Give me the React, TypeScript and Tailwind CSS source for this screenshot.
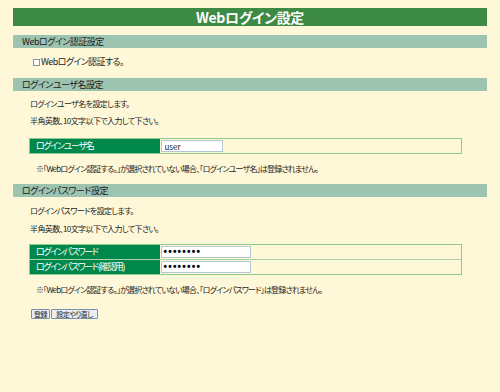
import React from 'react';

const jp = "font-['Noto_Sans_CJK_JP','Noto_Sans',sans-serif] [font-feature-settings:'palt']";

const SectionHeader = ({ title }: { title: string }) => (
  <div className="h-[13px] bg-[#9dc3b1] pl-[9px] text-[9px] leading-[13px] tracking-[-0.5px] text-[#1a1a1a]">
    {title}
  </div>
);

const Line = ({ children, className = '' }: { children: React.ReactNode; className?: string }) => (
  <p className={`h-[12px] pl-[17px] text-[8px] leading-[12px] tracking-[-0.6px] text-[#222] ${className}`}>{children}</p>
);

const FieldRow = ({
  label,
  value,
  secret,
  inputWidth,
  last,
}: {
  label: string;
  value: string;
  secret?: boolean;
  inputWidth: string;
  last?: boolean;
}) => (
  <tr className={last ? '' : 'border-b border-[#a6d4a6]'}>
    <td className="h-[14px] w-[130px] bg-[#00874b] pl-[6px] text-[9px] leading-[14px] tracking-[-1.3px] text-white">
      {label}
    </td>
    <td className="h-[14px] pl-[1px] align-middle">
      {secret ? (
        <div
          className={`flex h-[12px] ${inputWidth} items-center border border-[#b4c8d4] bg-white px-[2px] font-['Liberation_Sans',sans-serif] text-[10px] font-bold leading-[10px] tracking-[1.2px] text-black`}
        >
          {value}
        </div>
      ) : (
        <input
          type="text"
          readOnly
          value={value}
          className={`block h-[12px] ${inputWidth} border border-[#b4c8d4] bg-white px-[3px] text-[8px] leading-[10px] text-[#222] outline-none`}
        />
      )}
    </td>
  </tr>
);

const App = () => {
  return (
    <div className={`min-h-screen w-full bg-[#fff8d8] px-[13px] pt-[8px] ${jp}`}>
      <h1 className="h-[18px] bg-[#3d8a45] text-center text-[14px] font-bold leading-[18px] tracking-[-0.3px] text-white">
        Webログイン設定
      </h1>

      <div className="mt-[9px]">
        <SectionHeader title="Webログイン認証設定" />
      </div>
      <label className="mt-[9px] flex h-[10px] items-center pl-[20px] text-[9px] leading-[10px] tracking-[-0.6px] text-[#222]">
        <span className="mr-[1px] inline-block h-[7px] w-[7px] border border-[#7d94aa] bg-white" />
        Webログイン認証する。
      </label>

      <div className="mt-[11px]">
        <SectionHeader title="ログインユーザ名設定" />
      </div>
      <Line className="mt-[7px]">ログインユーザ名を設定します。</Line>
      <Line className="mt-[5px]">半角英数、10文字以下で入力して下さい。</Line>

      <table className="ml-[16px] mt-[11px] w-[433px] border-collapse border border-[#8fc98f]">
        <tbody>
          <FieldRow label="ログインユーザ名" value="user" inputWidth="w-[62px]" last />
        </tbody>
      </table>
      <p className="mt-[9px] h-[12px] pl-[23px] text-[8px] leading-[12px] tracking-[-0.8px] text-[#222]">
        ※「Webログイン認証する。」が選択されていない場合、「ログインユーザ名」は登録されません。
      </p>

      <div className="mt-[9px]">
        <SectionHeader title="ログインパスワード設定" />
      </div>
      <Line className="mt-[8px]">ログインパスワードを設定します。</Line>
      <Line className="mt-[6px]">半角英数、10文字以下で入力して下さい。</Line>

      <table className="ml-[16px] mt-[9px] w-[433px] border-collapse border border-[#8fc98f]">
        <tbody>
          <FieldRow label="ログインパスワード" value="••••••••" secret inputWidth="w-[90px]" />
          <FieldRow label="ログインパスワード(確認用)" value="••••••••" secret inputWidth="w-[90px]" last />
        </tbody>
      </table>
      <p className="mt-[9px] h-[12px] pl-[23px] text-[8px] leading-[12px] tracking-[-0.8px] text-[#222]">
        ※「Webログイン認証する。」が選択されていない場合、「ログインパスワード」は登録されません。
      </p>

      <div className="ml-[18px] mt-[13px] flex gap-[1px]">
        <button className="h-[10px] w-[19px] rounded-[1px] border border-[#7890a8] bg-[#e9eef3] text-[7px] leading-[8px] tracking-[-0.5px] text-[#222]">
          登録
        </button>
        <button className="h-[10px] w-[47px] rounded-[1px] border border-[#7890a8] bg-[#e9eef3] text-[7px] leading-[8px] tracking-[-0.5px] text-[#222]">
          設定やり直し
        </button>
      </div>
    </div>
  );
};

export default App;
